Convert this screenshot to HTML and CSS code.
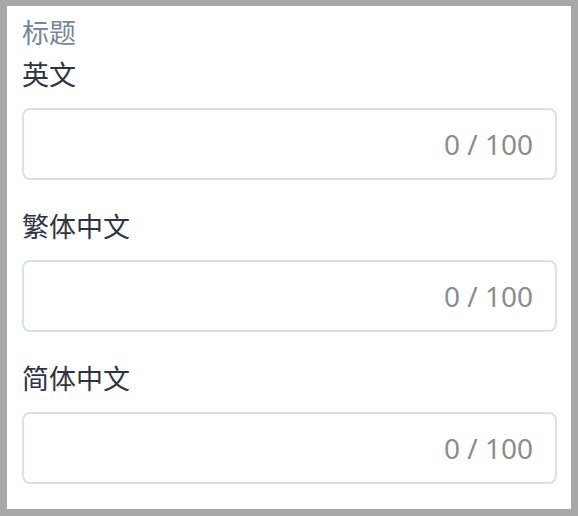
FILE: index.html
```html
<!DOCTYPE html>
<html lang="zh-CN">
<head>
    <meta charset="UTF-8">
    <meta name="viewport" content="width=device-width, initial-scale=1.0">
    <title>标题</title>
    <link rel="stylesheet" href="styles.css">
</head>
<body>
<div class="panel">
    <div class="section-title">标题</div>

    <div class="field">
        <label for="titleEn">英文</label>
        <div class="input-box">
            <input id="titleEn" type="text" maxlength="100">
            <span class="count">0 / 100</span>
        </div>
    </div>

    <div class="field">
        <label for="titleTc">繁体中文</label>
        <div class="input-box">
            <input id="titleTc" type="text" maxlength="100">
            <span class="count">0 / 100</span>
        </div>
    </div>

    <div class="field">
        <label for="titleSc">简体中文</label>
        <div class="input-box">
            <input id="titleSc" type="text" maxlength="100">
            <span class="count">0 / 100</span>
        </div>
    </div>
</div>
</body>
</html>
```

FILE: styles.css
```css
* { margin: 0; padding: 0; box-sizing: border-box; }
html, body { height: 100%; }
body { font-family: "Noto Sans", "Noto Sans CJK SC", sans-serif; background: #a8a8a8; padding: 6px 7px 7px 7px; }
.panel { background: #fff; height: 100%; padding: 9px 14px 0 15px; }
.section-title { font-size: 27px; line-height: 36px; color: #7b8699; }
.field { display: flex; flex-direction: column; margin-top: 6px; }
.field + .field { margin-top: 29px; }
.field label { font-size: 27px; line-height: 36px; color: #2e3442; margin-bottom: 15px; }
.input-box { display: flex; align-items: center; height: 72px; border: 2px solid #d9e1e9; border-radius: 8px; padding: 0 22px 0 16px; }
.input-box input { flex: 1; min-width: 0; border: none; outline: none; font: inherit; font-size: 27px; background: transparent; }
.count { font-size: 28px; color: #8c8c8c; white-space: nowrap; }
```
